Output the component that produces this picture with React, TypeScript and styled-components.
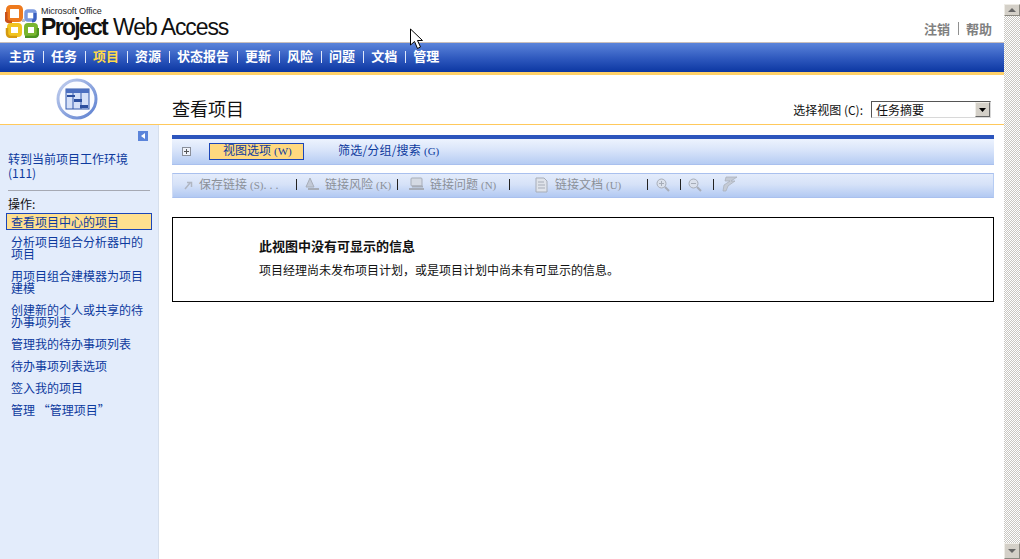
import React from "react";
import styled, { createGlobalStyle } from "styled-components";

const Global = createGlobalStyle`
  html, body { margin: 0; padding: 0; background: #fff; overflow: hidden; }
  body { font-family: "Liberation Serif", "Noto Sans CJK SC", serif; font-size: 12px; }
  * { box-sizing: border-box; }
`;
const Shell = styled.div`
  position: relative; width: 1020px; height: 559px; display: flex; overflow: hidden; background: #fff;
`;
const Page = styled.div`
  width: 1004px; height: 559px; display: flex; flex-direction: column;
`;
const Scrollbar = styled.div`
  width: 16px; height: 559px; display: flex; flex-direction: column; padding-top: 4px;
  background: #fff;
`;
const ScrollTrack = styled.div`
  flex: 1;
  background-color: #fff;
  background-image: conic-gradient(#c9c7c2 25%, #fff 0 50%, #c9c7c2 0 75%, #fff 0);
  background-size: 2px 2px;
`;
const ScrollBtn = styled.div`
  width: 16px; height: ${p => p.$h}px; background: #d4d0c8; display: flex; align-items: center; justify-content: center;
  border: 1px solid; border-color: #eeece6 #8a8880 #8a8880 #eeece6;
`;
const Header = styled.header`
  height: 42px; display: flex; justify-content: space-between; align-items: flex-start; padding: 4px 12px 0 5px;
`;
const Brand = styled.div`display: flex; gap: 2px;`;
const BrandText = styled.div`
  display: flex; flex-direction: column; font-family: "Liberation Sans", sans-serif; color: #111;
`;
const Ms = styled.div`font-size: 9px; line-height: 9px; margin-top: 3px; letter-spacing: -0.1px; color: #222;`;
const Product = styled.div`font-size: 23px; line-height: 23px; letter-spacing: -1.1px; white-space: nowrap;
  b { font-weight: 700; letter-spacing: -1.7px; margin-right: 6px; }
`;
const TopLinks = styled.div`
  display: flex; align-items: center; margin-top: 17px; font-family: "Noto Sans CJK SC", sans-serif; font-weight: 700;
  font-size: 13px; line-height: 15px; color: #808080;
`;
const TopSep = styled.span`width: 1px; height: 13px; background: #909090; margin: 0 7px 0 8px;`;
const Nav = styled.nav`
  height: 33px; display: flex; align-items: flex-start; gap: 8px; padding: 0 0 0 9px;
  border-top: 1px solid #c9bfbc; border-bottom: 3px solid #ffd169;
  background: linear-gradient(#5b84da, #2d57bd 55%, #0c37a2);
`;
const NavItem = styled.a`
  font-family: "Noto Sans CJK SC", sans-serif; font-weight: 700; font-size: 13px; line-height: 25px; color: ${p => p.$on ? "#ffd94a" : "#fff"};
  white-space: nowrap;
`;
const NavSep = styled.span`width: 1px; height: 12px; margin: 8px -1px 0 0; background: #dfe7fa;`;
const TitleRow = styled.div`
  height: 50px; display: flex; border-bottom: 1px solid #ffc95c;
`;
const LogoCell = styled.div`
  width: 159px; display: flex; justify-content: center; padding-top: 3px; padding-right: 5px;
`;
const TitleMain = styled.div`
  flex: 1; display: flex; justify-content: space-between; align-items: flex-end; padding: 0 13px 4px 13px;
`;
const Title = styled.h1`
  margin: 0; font-family: "Noto Sans CJK SC", sans-serif; font-weight: 400; font-size: 18px; line-height: 24px; color: #111;
`;
const ViewPick = styled.div`display: flex; align-items: center; gap: 8px; margin-bottom: 2px; font-family: "Noto Sans CJK SC", sans-serif; color: #111; font-size: 12px; line-height: 16px;`;
const Select = styled.div`
  width: 120px; height: 17px; display: flex; justify-content: space-between; align-items: center;
  border: 1px solid; border-color: #555 #d8d8d8 #d8d8d8 #555; background: #fff; padding-left: 4px; font-size: 12px; color: #111;
`;
const SelectBtn = styled.span`
  width: 15px; height: 15px; background: #d4d0c8; border: 1px solid; border-color: #f0eee8 #666 #666 #f0eee8;
  display: flex; align-items: center; justify-content: center;
`;
const Body = styled.div`flex: 1; display: flex; min-height: 0;`;
const Side = styled.aside`
  width: 159px; background: #e3ecfb; border-right: 1px solid #d6dfec; padding: 6px 0 0; display: flex; flex-direction: column;
  font-family: "Noto Sans CJK SC", sans-serif; font-size: 12px;
`;
const Collapse = styled.div`display: flex; justify-content: flex-end; padding-right: 10px; height: 11px;`;
const Goto = styled.a`
  display: block; margin: 10px 20px 0 8px; line-height: 14px; color: #0d3a9e;
`;
const Rule = styled.div`height: 1px; background: #a6a9b3; margin: 10px 8px 0;`;
const OpLabel = styled.div`margin: 6px 0 2px 8px; line-height: 14px; color: #111;`;
const SelectedItem = styled.a`
  display: block; margin: 0 6px 1px; height: 17px; line-height: 15px; padding-left: 4px;
  background: #ffe08f; border: 1px solid #1c46b8; color: #0d3a9e;
`;
const Item = styled.a`
  display: block; margin-left: 11px; width: 134px; padding: 5px 0; line-height: 12px; color: #0d3a9e;
`;
const Main = styled.main`
  flex: 1; padding: 10px 10px 0 13px; font-family: "Noto Sans CJK SC", sans-serif; background: #fff;
`;
const Filter = styled.div`
  height: 30px; border-top: 4px solid #2c55bd;
  border-bottom: 1px solid #a9c0ee;
  background: linear-gradient(#edf3fe, #dbe6fa 40%, #b6ccf3);
  display: flex; align-items: center; padding-left: 10px;
`;
const PlusBox = styled.span`
  width: 9px; height: 9px; border: 1px solid #8a8f9a; position: relative; margin-right: 18px; background: #eef2fa;
  &::before { content: ""; position: absolute; left: 1px; right: 1px; top: 3px; height: 1px; background: #555; }
  &::after { content: ""; position: absolute; top: 1px; bottom: 1px; left: 3px; width: 1px; background: #555; }
`;
const Tab = styled.a`
  width: ${p => p.$w}px; height: 17px; margin-right: ${p => p.$mr || 0}px; padding-left: ${p => p.$pl || 0}px;
  line-height: 11px; color: #0d3a9e; white-space: nowrap; letter-spacing: ${p => p.$ls || 0}px;
  border: 1px solid ${p => p.$on ? "#1c46b8" : "transparent"}; background: ${p => p.$on ? "#ffd97f" : "transparent"};
`;
const Key = styled.span`
  font-family: "Liberation Serif", serif; font-size: 11px; margin-left: 3px; letter-spacing: 0;
`;
const Dots = styled.span`letter-spacing: 3px; font-family: "Liberation Serif", serif;`;
const Tools = styled.div`
  height: 25px; margin-top: 8px; border: 1px solid #a9c0ee; border-width: 1px 0 1px 0;
  border-right: 1px solid #b6ccf3; border-left: 1px solid #d0dcf5;
  background: linear-gradient(#e4ecfb, #d6e2f8 45%, #b2c9f2);
  display: flex; align-items: center; padding: 0 0 2px 11px; color: #8b9098; line-height: 16px; white-space: nowrap;
`;
const Tool = styled.span`
  display: flex; align-items: center; gap: ${p => p.$gap ?? 5}px; width: ${p => p.$w}px; flex: none;
`;
const ToolSep = styled.span`width: 1px; height: 11px; background: #222; flex: none; margin-right: ${p => p.$mr}px;`;
const Empty = styled.section`
  margin-top: 19px; height: 85px; border: 1px solid #000; padding: 19px 0 0 86px; color: #111;
`;
const EmptyTitle = styled.div`font-size: 13px; font-weight: 700; line-height: 17px;`;
const EmptyText = styled.div`font-size: 12px; line-height: 16px; margin-top: 8px; white-space: nowrap;`;
const Cursor = styled.svg`position: absolute; left: 410px; top: 28px;`;

const OfficeLogo = () => (
  <svg width="34" height="34" viewBox="0 0 34 34">
    <rect x="3" y="3" width="13" height="13" rx="2.5" fill="#fff" stroke="#ee7a1e" strokeWidth="4" />
    <path d="M1 8 V14 Q1 18 5 18 H7" fill="none" stroke="#c9511a" strokeWidth="3" />
    <rect x="21" y="7" width="9" height="9" rx="2" fill="#fff" stroke="#7d9be0" strokeWidth="3.5" />
    <path d="M30 9 V14 Q30 17 27 17" fill="none" stroke="#3a60c0" strokeWidth="3" />
    <rect x="4" y="21" width="11" height="10" rx="2" fill="#fff" stroke="#f2c41f" strokeWidth="4" />
    <path d="M2 24 V29 Q2 33 6 33 H12" fill="none" stroke="#d49a10" strokeWidth="2.5" />
    <rect x="21" y="21" width="10" height="10" rx="2" fill="#fff" stroke="#79b62f" strokeWidth="4" />
    <path d="M20 33 H29 Q33 33 33 29 V24" fill="none" stroke="#4c9321" strokeWidth="2.5" />
    <rect x="17" y="15" width="3" height="3" fill="#b9bec8" />
  </svg>
);
const ProjectBadge = () => (
  <svg width="42" height="42" viewBox="0 0 42 42">
    <defs>
      <linearGradient id="ring" x1="0" y1="0" x2="1" y2="1"><stop offset="0" stopColor="#c4d0ee" /><stop offset="1" stopColor="#5b7fd0" /></linearGradient>
    </defs>
    <circle cx="21" cy="21" r="19" fill="#fbfcff" stroke="url(#ring)" strokeWidth="3" />
    <rect x="10" y="11" width="23" height="20" fill="#d5e0f8" stroke="#3358ac" />
    <rect x="10" y="11" width="23" height="4" fill="#4c6fc0" />
    <path d="M17 15v16M25 15v16" stroke="#3358ac" />
    <rect x="11" y="17" width="8" height="2" fill="#2c4f9f" />
    <rect x="18" y="21" width="8" height="3" fill="#2c4f9f" />
    <rect x="24" y="27" width="8" height="3" fill="#2c4f9f" />
  </svg>
);
const Gray = "#a7adb8";
const IconSave = () => <svg width="10" height="10" viewBox="0 0 10 10"><path d="M1 9 L6 3 M3 2.5h4.5V7" fill="none" stroke="#b0b6c2" strokeWidth="1.5" /></svg>;
const IconRisk = () => <svg width="15" height="15" viewBox="0 0 15 15"><path d="M5 1 L9 10 H1Z" fill="#c2c9d6" stroke={Gray} /><path d="M3 12 h11" stroke={Gray} strokeWidth="2" /></svg>;
const IconIssue = () => <svg width="17" height="15" viewBox="0 0 17 15"><rect x="3" y="1" width="11" height="8" rx="1" fill="#d5dae3" stroke={Gray} /><path d="M1 12 h15 M4 9.5h11" stroke={Gray} strokeWidth="2" /></svg>;
const IconDoc = () => <svg width="15" height="16" viewBox="0 0 15 16"><path d="M1 1h8l3 3v11H1z" fill="#dfe3ea" stroke={Gray} /><path d="M3 5h6M3 8h7M3 11h7" stroke={Gray} /></svg>;
const IconZoom = ({ plus }: { plus?: boolean }) => <svg width="14" height="14" viewBox="0 0 14 14"><circle cx="5.5" cy="5.5" r="4.5" fill="#dbe1ec" stroke={Gray} /><path d="M9 9l4 4" stroke={Gray} strokeWidth="2" /><path d={plus ? "M3 5.5h5M5.5 3v5" : "M3 5.5h5"} stroke={Gray} /></svg>;
const IconTool = () => <svg width="17" height="17" viewBox="0 0 17 17"><path d="M5 1 H16 L10 5 H14 L7 10 L5 15 L2 15 L3 9 L9 5 H4Z" fill="#c5cbd6" stroke={Gray} strokeWidth="0.7" /></svg>;

const nav = ["主页", "任务", "项目", "资源", "状态报告", "更新", "风险", "问题", "文档", "管理"];
const items = ["分析项目组合分析器中的项目", "用项目组合建模器为项目建模", "创建新的个人或共享的待办事项列表", "管理我的待办事项列表", "待办事项列表选项", "签入我的项目", "管理 “管理项目”"];

export default function App() {
  return (
    <Shell>
      <Global />
      <Page>
        <Header>
          <Brand>
            <OfficeLogo />
            <BrandText>
              <Ms>Microsoft Office</Ms>
              <Product><b>Project</b>Web Access</Product>
            </BrandText>
          </Brand>
          <TopLinks><span>注销</span><TopSep /><span>帮助</span></TopLinks>
        </Header>
        <Nav>
          {nav.map((n, i) => (
            <React.Fragment key={n}>
              {i > 0 && <NavSep />}
              <NavItem $on={n === "项目"}>{n}</NavItem>
            </React.Fragment>
          ))}
        </Nav>
        <TitleRow>
          <LogoCell><ProjectBadge /></LogoCell>
          <TitleMain>
            <Title>查看项目</Title>
            <ViewPick>
              <span>选择视图 (C):</span>
              <Select>
                <span>任务摘要</span>
                <SelectBtn><svg width="7" height="4" viewBox="0 0 7 4"><path d="M0 0h7L3.5 4z" fill="#000" /></svg></SelectBtn>
              </Select>
            </ViewPick>
          </TitleMain>
        </TitleRow>
        <Body>
          <Side>
            <Collapse>
              <svg width="10" height="10" viewBox="0 0 10 10"><rect width="10" height="10" fill="#5b84da" /><path d="M7 2v6L3 5z" fill="#fff" /></svg>
            </Collapse>
            <Goto>转到当前项目工作环境 (111)</Goto>
            <Rule />
            <OpLabel>操作:</OpLabel>
            <SelectedItem>查看项目中心的项目</SelectedItem>
            {items.map(t => <Item key={t}>{t}</Item>)}
          </Side>
          <Main>
            <Filter>
              <PlusBox />
              <Tab $on $w={95} $pl={13} $mr={33}>视图选项<Key>(W)</Key></Tab>
              <Tab $w={110} $ls={0.2}>筛选/分组/搜索<Key>(G)</Key></Tab>
            </Filter>
            <Tools>
              <Tool $w={112}><IconSave /><span>保存链接<Key>(S)</Key><Dots>...</Dots></span></Tool>
              <ToolSep $mr={8} />
              <Tool $w={92}><IconRisk /><span>链接风险<Key>(K)</Key></span></Tool>
              <ToolSep $mr={10} />
              <Tool $w={101}><IconIssue /><span>链接问题<Key>(N)</Key></span></Tool>
              <ToolSep $mr={25} />
              <Tool $w={112}><IconDoc /><span>链接文档<Key>(U)</Key></span></Tool>
              <ToolSep $mr={8} />
              <Tool $w={24}><IconZoom plus /></Tool>
              <ToolSep $mr={7} />
              <Tool $w={25}><IconZoom /></Tool>
              <ToolSep $mr={7} />
              <Tool $w={20}><IconTool /></Tool>
            </Tools>
            <Empty>
              <EmptyTitle>此视图中没有可显示的信息</EmptyTitle>
              <EmptyText>项目经理尚未发布项目计划，或是项目计划中尚未有可显示的信息。</EmptyText>
            </Empty>
          </Main>
        </Body>
      </Page>
      <Scrollbar>
        <ScrollBtn $h={12}><svg width="8" height="4" viewBox="0 0 8 4"><path d="M0 4h8L4 0z" fill="#666" /></svg></ScrollBtn>
        <ScrollTrack />
        <ScrollBtn $h={16}><svg width="8" height="4" viewBox="0 0 8 4"><path d="M0 0h8L4 4z" fill="#666" /></svg></ScrollBtn>
      </Scrollbar>
      <Cursor width="14" height="24" viewBox="0 0 14 24">
        <path d="M0.5 1 V17 L4.5 13.5 L7.5 20.5 L10.5 19 L7.5 12.5 H12.5 Z" fill="#fff" stroke="#000" />
      </Cursor>
    </Shell>
  );
}
